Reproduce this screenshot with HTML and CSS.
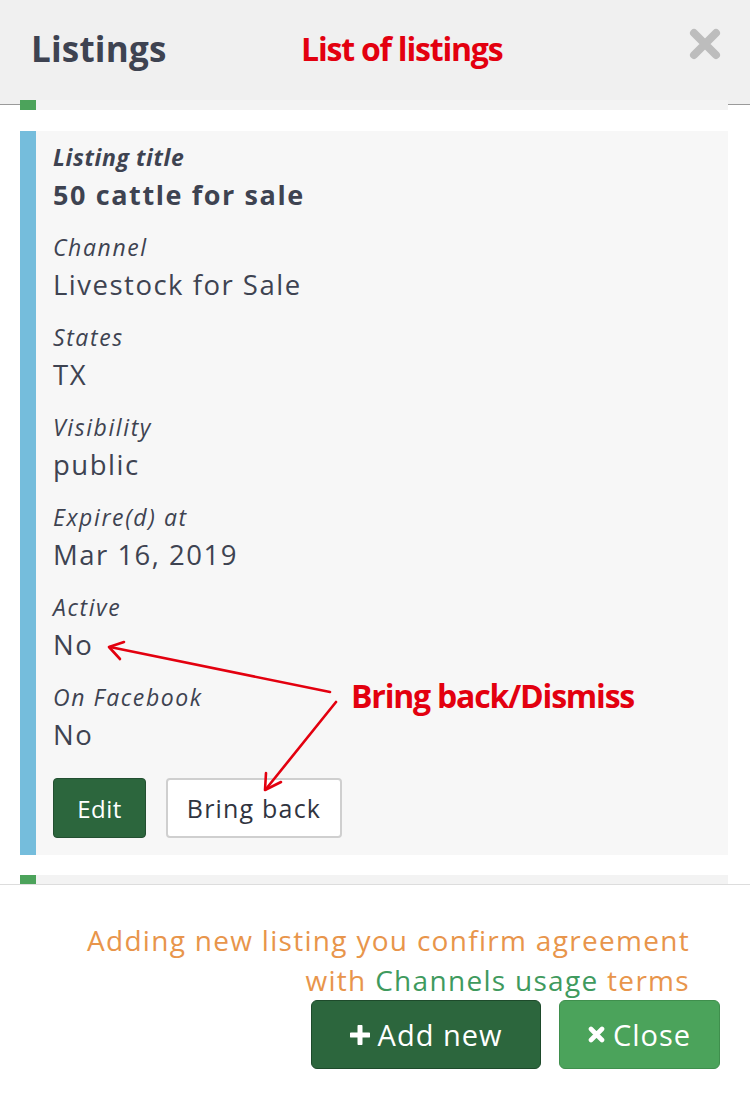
FILE: index.html
```html
<!DOCTYPE html>
<html lang="en">
<head>
<meta charset="utf-8">
<title>Listings</title>
<link rel="stylesheet" href="styles.css">
</head>
<body>
<div class="modal">
  <header class="head">
    <h1 class="head-title">Listings</h1>
    <span class="note note-top">List of listings</span>
    <button class="head-close" aria-label="Close">
      <svg width="32" height="32" viewBox="0 0 32 32"><path d="M5 5 L27 27 M27 5 L5 27" stroke="#bdbdbd" stroke-width="8" stroke-linecap="round"/></svg>
    </button>
  </header>
  <main class="list">
    <div class="stub stub-green stub-top"></div>
    <article class="card">
      <div class="field"><div class="label label-strong">Listing title</div><div class="value value-strong">50 cattle for sale</div></div>
      <div class="field"><div class="label">Channel</div><div class="value">Livestock for Sale</div></div>
      <div class="field"><div class="label">States</div><div class="value">TX</div></div>
      <div class="field"><div class="label">Visibility</div><div class="value">public</div></div>
      <div class="field"><div class="label">Expire(d) at</div><div class="value">Mar 16, 2019</div></div>
      <div class="field"><div class="label">Active</div><div class="value">No</div></div>
      <div class="field"><div class="label">On Facebook</div><div class="value">No</div></div>
      <div class="actions">
        <button class="btn btn-dark">Edit</button>
        <button class="btn btn-light">Bring back</button>
      </div>
    </article>
    <div class="stub stub-green stub-bottom"></div>
  </main>
  <footer class="foot">
    <p class="terms">Adding new listing you confirm agreement<br>with <span class="terms-link">Channels usage</span> terms</p>
    <div class="foot-actions">
      <button class="btn btn-big btn-dark">
        <svg width="20" height="20" viewBox="0 0 20 20"><path d="M10 1.5 V18.5 M1.5 10 H18.5" stroke="#fff" stroke-width="5" stroke-linecap="round"/></svg>
        Add new
      </button>
      <button class="btn btn-big btn-green">
        <svg width="17" height="17" viewBox="0 0 17 17"><path d="M3 3 L14 14 M14 3 L3 14" stroke="#fff" stroke-width="4.6" stroke-linecap="round"/></svg>
        Close
      </button>
    </div>
  </footer>
  <span class="note note-side">Bring back/Dismiss</span>
  <svg class="arrows" width="750" height="1095" viewBox="0 0 750 1095">
    <g stroke="#e3000f" stroke-width="2.6" fill="none" stroke-linecap="round" stroke-linejoin="round">
      <path d="M330 692 L110 647"/>
      <path d="M124 642 L109 647 L120 659"/>
      <path d="M336 702 L266 789"/>
      <path d="M266 773 L265 790 L281 782"/>
    </g>
  </svg>
</div>
</body>
</html>
```
FILE: styles.css
```css
* { box-sizing: border-box; }
html, body { margin: 0; padding: 0; background: #fff; }
body { font-family: "Open Sans", "Noto Sans", sans-serif; color: #3e4351; }

.modal {
  position: relative;
  width: 750px;
  height: 1095px;
  display: flex;
  flex-direction: column;
  overflow: hidden;
}

.head {
  height: 100px;
  flex: none;
  background: #f0f0f0;
  display: flex;
  align-items: center;
  padding: 0 31px;
}
.head-title {
  margin: 0;
  font-size: 35px;
  line-height: 44px;
  font-weight: 700;
  color: #3e4351;
  width: 270px;
  padding-bottom: 2px;
  letter-spacing: 0.2px;
}
.note {
  font-family: "Open Sans", sans-serif;
  font-weight: 700;
  color: #e3000f;
  font-size: 32px;
  letter-spacing: -1.2px;
}
.note-top { flex: 1; padding-bottom: 2px; line-height: 44px; }
.head-close {
  border: 0;
  background: none;
  padding: 0;
  margin-right: -2px;
  margin-top: -12px;
  display: flex;
}

.list {
  flex: none;
  background: linear-gradient(to bottom, #f0f0f0 0, #f0f0f0 4px, #9a9a9a 4px, #9a9a9a 5px, #fff 5px);
  padding: 0 22px 0 20px;
  display: flex;
  flex-direction: column;
  gap: 21px;
}
.stub {
  background: #f3f3f3;
  border-left: 16px solid #4ca35b;
}
.stub-top { height: 10px; }
.stub-bottom { height: 9px; margin-top: -1px; }

.card {
  background: #f7f7f7;
  border-left: 16px solid #75bddc;
  padding: 11px 17px 17px;
}
.field { margin-bottom: 14px; }
.field:last-of-type { margin-bottom: 0; }
.label {
  font-style: italic;
  font-size: 23px;
  line-height: 30px;
  letter-spacing: 1.6px;
  color: #3e4351;
}
.label-strong { font-weight: 700; letter-spacing: 0.6px; }
.value {
  font-size: 27.5px;
  line-height: 46px;
  letter-spacing: 1.5px;
  color: #3e4351;
}
.value-strong { font-weight: 700; font-size: 27px; letter-spacing: 1.6px; }

.actions {
  display: flex;
  gap: 20px;
  margin-top: 20px;
}
.btn {
  font-family: inherit;
  border-radius: 4px;
  font-size: 24px;
  height: 60px;
  padding: 0 6px;
  cursor: pointer;
  display: inline-flex;
  align-items: center;
  justify-content: center;
}
.btn-dark { background: #2c663d; border: 1px solid #234f31; color: #fff; width: 93px; letter-spacing: 0.5px; }
.btn-light { background: #fff; border: 2px solid #cfcfcf; color: #30343f; width: 176px; font-size: 25px; letter-spacing: 1.2px; }

.foot {
  flex: 1;
  border-top: 1px solid #dddddd;
  padding: 35px 30px 0 0;
  display: flex;
  flex-direction: column;
  align-items: flex-end;
}
.terms {
  margin: 0 30px 0 0;
  text-align: right;
  font-size: 28px;
  line-height: 40px;
  letter-spacing: 1.3px;
  color: #e8954b;
}
.terms-link { color: #3f9a5e; }
.foot-actions {
  display: flex;
  gap: 18px;
}
.btn-big {
  height: 69px;
  font-size: 29px;
  border-radius: 6px;
  gap: 8px;
  letter-spacing: 1px;
}
.foot-actions .btn-dark { width: 230px; border-color: #1e4a2b; letter-spacing: 1px; }
.btn-green { background: #4ba35b; border: 1px solid #3f8f4d; color: #fff; width: 161px; }

.note-side {
  position: absolute;
  left: 351px;
  top: 674px;
  line-height: 44px;
}
.arrows {
  position: absolute;
  left: 0;
  top: 0;
  pointer-events: none;
}
```
